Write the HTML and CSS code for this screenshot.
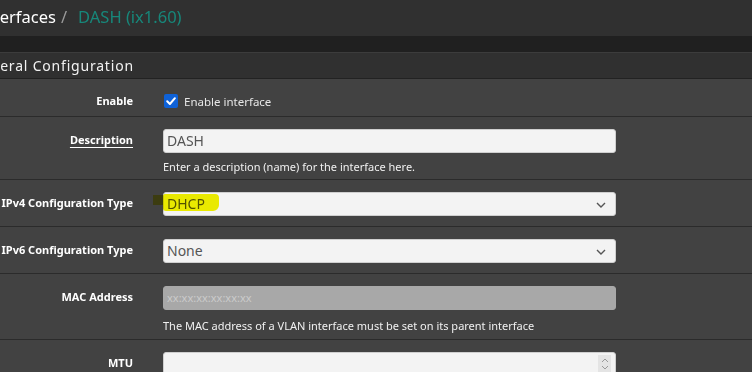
FILE: index.html
```html
<!DOCTYPE html>
<html>
    <head>
        <meta charset="UTF-8">
        <title>Interfaces / DASH</title>
        <link rel="stylesheet" href="styles.css">
    </head>
    <body>
        <div class="topbar">
            <h1><span class="crumb">Interfaces</span><span class="sep">/</span><span class="current">DASH (ix1.60)</span></h1>
        </div>
        <div class="tabs"></div>
        <div class="panel">
            <div class="panel-heading">General Configuration</div>
            <div class="panel-body">
                <div class="row row-check">
                    <label class="label">Enable</label>
                    <div class="field">
                        <label class="check">
                            <span class="box">
                                <svg viewBox="0 0 14 14" width="14" height="14"><path d="M3.2 7.3 L5.9 10 L10.9 4.2" fill="none" stroke="#fff" stroke-width="2" stroke-linecap="round" stroke-linejoin="round"/></svg>
                            </span>
                            Enable interface
                        </label>
                    </div>
                </div>
                <div class="row has-help">
                    <label class="label"><u>Description</u></label>
                    <div class="field">
                        <div class="input">DASH</div>
                        <div class="help">Enter a description (name) for the interface here.</div>
                    </div>
                </div>
                <div class="row">
                    <label class="label">IPv4 Configuration Type</label>
                    <div class="field">
                        <div class="input select">DHCP<span class="mark"></span><span class="mark-dark"></span>
                            <svg class="chevron" viewBox="0 0 10 6" width="10" height="6"><path d="M1 1 L5 5 L9 1" fill="none" stroke="#555" stroke-width="1.4"/></svg>
                        </div>
                    </div>
                </div>
                <div class="row">
                    <label class="label">IPv6 Configuration Type</label>
                    <div class="field">
                        <div class="input select">None
                            <svg class="chevron" viewBox="0 0 10 6" width="10" height="6"><path d="M1 1 L5 5 L9 1" fill="none" stroke="#555" stroke-width="1.4"/></svg>
                        </div>
                    </div>
                </div>
                <div class="row has-help mac">
                    <label class="label">MAC Address</label>
                    <div class="field">
                        <div class="input disabled">xx:xx:xx:xx:xx:xx</div>
                        <div class="help">The MAC address of a VLAN interface must be set on its parent interface</div>
                    </div>
                </div>
                <div class="row">
                    <label class="label">MTU</label>
                    <div class="field">
                        <div class="input number">
                            <span class="spin">
                                <svg viewBox="0 0 10 14" width="10" height="14"><path d="M2 5 L5 2 L8 5 M2 9 L5 12 L8 9" fill="none" stroke="#999" stroke-width="1"/></svg>
                            </span>
                        </div>
                    </div>
                </div>
            </div>
        </div>
    </body>
</html>
```

FILE: styles.css
```css
body {
    font-family: "Noto Sans", "Open Sans", sans-serif;
    font-size: 11px;
    margin: 0;
    padding: 0;
    background: #424242;
    color: #e6e6e6;
    overflow: hidden;
}
.topbar {
    background: #303030;
    height: 36px;
    margin-left: -22px;
}
h1 {
    margin: 0;
    font-weight: normal;
    font-size: 16.5px;
    line-height: 34px;
    white-space: nowrap;
}
.crumb {
    color: #fff;
}
.sep {
    color: #9a9a9a;
    margin: 0 11px 0 5px;
}
.current {
    color: #17877a;
}
.tabs {
    height: 16px;
    background: #202020;
}
.panel-heading {
    background: #303030;
    border-top: 1px solid #3c3c3c;
    border-bottom: 1px solid #222;
    height: 25px;
    line-height: 25px;
    font-size: 14px;
    letter-spacing: 0.8px;
    color: #f2f2f2;
    margin-left: -29px;
    white-space: nowrap;
}
.row {
    display: flex;
    border-bottom: 1px solid #2b2b2b;
    padding: 12px 0 10px;
}
.row-check {
    padding: 14px 0 7px;
}
.row.has-help {
    padding-bottom: 4px;
}
.row.mac {
    padding-bottom: 5px;
}
.mac .help {
    margin-top: 7px;
}
.label {
    width: 133px;
    flex: none;
    display: flex;
    justify-content: flex-end;
    white-space: nowrap;
    font-weight: bold;
    font-size: 11px;
    color: #fff;
    line-height: 21px;
    height: 24px;
}
.row-check .label {
    line-height: 16px;
    height: 16px;
}
.label u {
    text-decoration-thickness: 1px;
    text-underline-offset: 3px;
}
.field {
    margin-left: 30px;
    width: 453px;
}
.check {
    display: flex;
    align-items: center;
    height: 16px;
    gap: 6px;
    font-size: 11.5px;
}
.box {
    width: 14px;
    height: 14px;
    background: #0f62d8;
    border-radius: 2px;
    display: block;
    margin-left: 1px;
}
.box svg {
    display: block;
}
.input {
    position: relative;
    box-sizing: border-box;
    height: 24px;
    line-height: 22px;
    background: #f3f3f3;
    border: 1px solid #cfcfcf;
    border-radius: 3px;
    color: #555;
    font-size: 14px;
    padding-left: 3px;
}
.select .chevron {
    position: absolute;
    right: 9px;
    top: 9px;
}
.disabled {
    background: #a8a8a8;
    border-color: #a8a8a8;
    color: #cbcbcb;
    font-size: 11px;
}
.help {
    margin-top: 5px;
    line-height: 17px;
    color: #f0f0f0;
}
.spin {
    position: absolute;
    right: 4px;
    top: 2px;
    width: 13px;
    height: 18px;
    background: #e4e4e4;
    display: flex;
    align-items: center;
    justify-content: center;
}
.mark {
    position: absolute;
    left: -1px;
    top: 1px;
    width: 56px;
    height: 17px;
    background: #f5f500;
    border-radius: 2px 4px 6px 3px;
    mix-blend-mode: multiply;
}
.mark-dark {
    position: absolute;
    left: -11px;
    top: 2px;
    width: 10px;
    height: 10px;
    background: #3c3c10;
}
```
